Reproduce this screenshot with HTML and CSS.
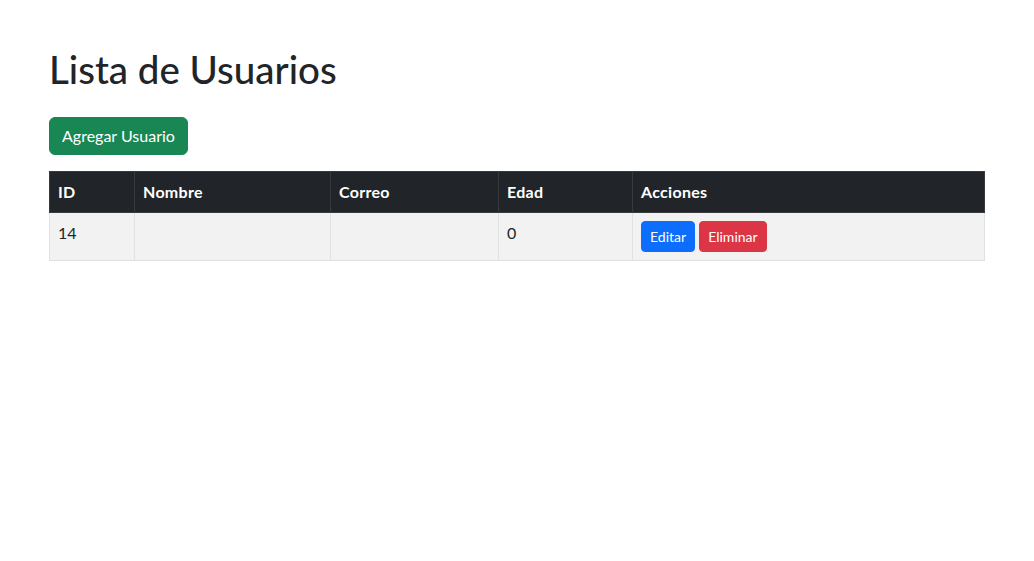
FILE: index.html
```html
<!DOCTYPE html>
<html lang="es">
<head>
<meta charset="utf-8">
<title>Lista de Usuarios</title>
<link rel="stylesheet" href="styles.css">
</head>
<body>
<div class="container">
  <h1 class="title">Lista de Usuarios</h1>
  <button class="btn btn-success">Agregar Usuario</button>
  <table class="table">
    <thead>
      <tr>
        <th class="c-id">ID</th>
        <th class="c-nombre">Nombre</th>
        <th class="c-correo">Correo</th>
        <th class="c-edad">Edad</th>
        <th class="c-acciones">Acciones</th>
      </tr>
    </thead>
    <tbody>
      <tr>
        <td>14</td>
        <td></td>
        <td></td>
        <td>0</td>
        <td class="actions">
          <button class="btn btn-sm btn-primary">Editar</button>
          <button class="btn btn-sm btn-danger">Eliminar</button>
        </td>
      </tr>
    </tbody>
  </table>
</div>
</body>
</html>
```
FILE: styles.css
```css
* { box-sizing: border-box; }
body {
  margin: 0;
  font-family: Lato, "Noto Sans", sans-serif;
  font-size: 16px;
  line-height: 1.5;
  color: #212529;
  background: #fff;
}
.container {
  width: 960px;
  margin: 0 auto;
  padding: 45px 12px 0;
}
.title {
  margin: 0 0 24px;
  font-size: 38.5px;
  font-weight: 500;
  line-height: 48px;
}
.btn {
  font-family: inherit;
  display: inline-block;
  border: 1px solid transparent;
  color: #fff;
  cursor: pointer;
}
.btn-success {
  background: #198754;
  border-color: #198754;
  font-size: 16px;
  line-height: 1.5;
  padding: 6px 12px;
  border-radius: 6px;
  margin-bottom: 16px;
}
.btn-sm {
  font-size: 14px;
  line-height: 1.5;
  padding: 4px 8px;
  border-radius: 4px;
}
.btn-primary { background: #0d6efd; border-color: #0d6efd; }
.btn-danger { background: #dc3545; border-color: #dc3545; margin-left: 0; }
.table {
  width: 100%;
  border-collapse: collapse;
  table-layout: fixed;
}
.table th, .table td {
  padding: 8px;
  text-align: left;
  vertical-align: top;
}
.table thead th {
  background: #212529;
  color: #fff;
  font-weight: 700;
  letter-spacing: 0.3px;
  border: 1px solid #373b3e;
}
.table tbody td {
  background: #f2f2f2;
  border: 1px solid #dee2e6;
}
.c-id { width: 85px; }
.c-nombre { width: 196px; }
.c-correo { width: 168px; }
.c-edad { width: 134px; }
.c-acciones { width: auto; }
```
